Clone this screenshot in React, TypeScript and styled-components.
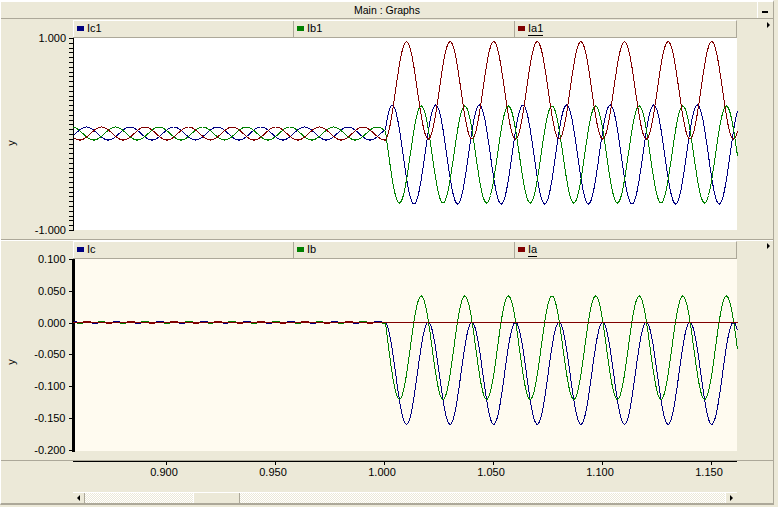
import React from 'react';
import styled, { createGlobalStyle } from 'styled-components';

const FACE = '#ece9d8';
const EDGE = '#aca899';

const GlobalStyle = createGlobalStyle`
  html, body {
    margin: 0;
    padding: 0;
    background: ${FACE};
  }
  body {
    font-family: "Liberation Sans", Arial, sans-serif;
    font-size: 11px;
    color: #000;
  }
`;

const Window = styled.div`
  width: 774px;
  height: 505px;
  display: flex;
  flex-direction: column;
  background: ${FACE};
  border-top: 2px solid #fff;
  border-left: 1px solid #fff;
  border-right: 1px solid ${EDGE};
  border-bottom: 2px solid ${EDGE};
  box-sizing: border-box;
  overflow: hidden;
`;

const TitleBar = styled.div`
  height: 17px;
  flex: none;
  display: flex;
  align-items: center;
  justify-content: center;
  border-bottom: 1px solid ${EDGE};
  position: relative;
  font-size: 10.5px;
  box-sizing: border-box;
`;

const MinButton = styled.button`
  position: absolute;
  right: 0;
  top: 0;
  width: 16px;
  height: 16px;
  padding: 0 1px 0 0;
  background: ${FACE};
  border: 0;
  border-left: 1px solid #fff;
  display: flex;
  align-items: center;
  justify-content: center;
  box-sizing: border-box;

  &::before {
    content: '';
    display: block;
    width: 6px;
    height: 2px;
    margin-top: 3px;
    background: #000;
  }
`;

const Panel = styled.section<{ $lit?: boolean }>`
  height: 221px;
  flex: none;
  display: flex;
  border-top: 1px solid ${p => (p.$lit ? '#fff' : FACE)};
  border-bottom: 1px solid ${EDGE};
  box-sizing: border-box;
`;

const AxisSvg = styled.svg`
  display: block;
  flex: none;
  width: 72px;
`;

const PanelBody = styled.div`
  width: 664px;
  flex: none;
  display: flex;
  flex-direction: column;
`;

const Legend = styled.div`
  height: 18px;
  flex: none;
  display: grid;
  grid-template-columns: 220px 221px 1fr;
  border-top: 1px solid #fff;
  border-bottom: 1px solid ${EDGE};
  border-right: 1px solid ${EDGE};
  box-sizing: border-box;
`;

const LegendTab = styled.div`
  display: flex;
  align-items: center;
  gap: 3px;
  padding-left: 3px;
  border-left: 1px solid #fff;

  & + & {
    border-left: 1px solid ${EDGE};
  }
`;

const Swatch = styled.span<{ $color: string }>`
  width: 7px;
  height: 5px;
  margin-top: -2px;
  background: ${p => p.$color};
`;

const LegendName = styled.span<{ $focus?: boolean }>`
  font-size: 11px;
  line-height: 13px;
  border-bottom: 1px solid ${p => (p.$focus ? '#000' : 'transparent')};
`;

const Plot = styled.svg<{ $bg: string }>`
  display: block;
  width: 664px;
  overflow: visible;
  background: ${p => p.$bg};
`;

const Gutter = styled.div`
  flex: 1;
  padding: 2px 0 0 30px;
`;

const SmallArrowRight = styled.span`
  display: block;
  width: 0;
  height: 0;
  border-style: solid;
  border-width: 3px 0 3px 3px;
  border-color: transparent transparent transparent #000;
`;

const XAxisRow = styled.div`
  height: 31px;
  flex: none;
  display: flex;
`;

const XAxisSvg = styled.svg`
  display: block;
  margin-left: 72px;
`;

const ScrollRow = styled.div`
  height: 11px;
  flex: none;
  margin-left: 72px;
  width: 664px;
  display: flex;
  border-top: 1px solid #fff;
  box-sizing: border-box;
`;

const ScrollButton = styled.div`
  width: 12px;
  flex: none;
  display: flex;
  align-items: center;
  justify-content: center;
  background: ${FACE};
  border-right: 1px solid ${EDGE};
  box-sizing: border-box;

  &:last-child {
    border-right: 0;
    border-left: 1px solid #fff;
  }
`;

const ArrowGlyph = styled.span<{ $left?: boolean }>`
  display: block;
  width: 0;
  height: 0;
  border-style: solid;
  border-width: ${p => (p.$left ? '3px 3px 3px 0' : '3px 0 3px 3px')};
  border-color: ${p =>
    p.$left
      ? 'transparent #000 transparent transparent'
      : 'transparent transparent transparent #000'};
`;

const Track = styled.div<{ $size: number }>`
  width: ${p => p.$size}px;
  flex: ${p => (p.$size ? 'none' : 1)};
  background: repeating-conic-gradient(${FACE} 0 25%, #fff 0 50%) 0 0 / 2px 2px;
`;

const Thumb = styled.div`
  width: 47px;
  flex: none;
  background: ${FACE};
  border-left: 1px solid #fff;
  border-right: 1px solid ${EDGE};
  box-sizing: border-box;
`;

const NAVY = '#000080';
const GREEN = '#008000';
const RED = '#800000';

const PLOT_W = 664;
const PERIOD = 43.6;
const FAULT_X = 385 - 73;

type Wave = { center: number; amp: number; peak: number };
type Curve = { color: string; points: string };

// plot x is px from the left edge of the plot; peaks are given in that frame too
const wave = (w: Wave, x: number) =>
  w.center - w.amp * Math.cos(((x - w.peak) / PERIOD) * 2 * Math.PI);

const makePoints = (before: Wave, after: Wave) => {
  const jump = wave(before, FAULT_X) - wave(after, FAULT_X);
  const pts: string[] = [];
  for (let x = 0; x <= PLOT_W; x += 1) {
    const y =
      x <= FAULT_X
        ? wave(before, x)
        : wave(after, x) + jump * Math.exp(-(x - FAULT_X) / 2.5);
    pts.push(`${x + 0.5},${y.toFixed(1)}`);
  }
  return pts.join(' ');
};

const toPlot = (peak: number) => peak - 73;

const topCurves: Curve[] = [
  {
    color: NAVY,
    points: makePoints(
      { center: 95.5, amp: 6.5, peak: toPlot(86) },
      { center: 116.5, amp: 49.5, peak: toPlot(391.7) },
    ),
  },
  {
    color: GREEN,
    points: makePoints(
      { center: 95.5, amp: 6.5, peak: toPlot(115) },
      { center: 116.5, amp: 48.5, peak: toPlot(420.7) },
    ),
  },
  {
    color: RED,
    points: makePoints(
      { center: 95.5, amp: 6.5, peak: toPlot(101) },
      { center: 52.3, amp: 48.7, peak: toPlot(406) },
    ),
  },
];

const bottomCurves: Curve[] = [
  {
    color: NAVY,
    points: makePoints(
      { center: 63.45, amp: 0.55, peak: toPlot(116) },
      { center: 114.3, amp: 51, peak: toPlot(427.8) },
    ),
  },
  {
    color: GREEN,
    points: makePoints(
      { center: 63.45, amp: 0.55, peak: toPlot(101) },
      { center: 88.7, amp: 51.7, peak: toPlot(420.7) },
    ),
  },
  {
    color: RED,
    points: makePoints(
      { center: 63.45, amp: 0.55, peak: toPlot(86.5) },
      { center: 63.5, amp: 0, peak: 0 },
    ),
  },
];

const axisText = {
  fontSize: 11,
  fontFamily: '"Liberation Sans", Arial, sans-serif',
  fill: '#000',
};

const TopAxis = () => {
  const ticks = Array.from({ length: 41 }, (_, i) => Math.round(18 + i * 4.8));
  return (
    <AxisSvg height={219} viewBox="0 0 72 219">
      <text {...axisText} x={65} y={22} textAnchor="end">1.000</text>
      <text {...axisText} x={65} y={214} textAnchor="end">-1.000</text>
      <text {...axisText} transform="translate(14 123) rotate(-90)" textAnchor="middle">y</text>
      <g stroke="#000" shapeRendering="crispEdges">
        {ticks.map(t => (
          <line key={t} x1={68} y1={t + 0.5} x2={72} y2={t + 0.5} />
        ))}
      </g>
    </AxisSvg>
  );
};

const bottomLabels = ['0.100', '0.050', '0.000', '-0.050', '-0.100', '-0.150', '-0.200'];

const BottomAxis = () => (
  <AxisSvg height={219} viewBox="0 0 72 219">
    {bottomLabels.map((label, i) => (
      <text key={label} {...axisText} x={64.5} y={22 + i * 31.83} textAnchor="end">{label}</text>
    ))}
    <text {...axisText} transform="translate(14 121) rotate(-90)" textAnchor="middle">y</text>
    <g stroke="#000" shapeRendering="crispEdges">
      <rect x={71} y={18} width={1} height={193} fill="#000" stroke="none" />
      {bottomLabels.map((label, i) => {
        const y = Math.round(18 + i * 31.83) + 0.5;
        return <line key={label} x1={68} y1={y} x2={71} y2={y} />;
      })}
    </g>
  </AxisSvg>
);

const Curves = ({ curves }: { curves: Curve[] }) => (
  <>
    {curves.map(c => (
      <polyline
        key={c.color}
        points={c.points}
        fill="none"
        stroke={c.color}
        strokeWidth={1}
        shapeRendering="crispEdges"
      />
    ))}
  </>
);

const xTicks = [
  { x: 93.5, label: '0.900' },
  { x: 202.5, label: '0.950' },
  { x: 311.5, label: '1.000' },
  { x: 420.5, label: '1.050' },
  { x: 529.5, label: '1.100' },
  { x: 638.5, label: '1.150' },
];

const names = (suffix: string) => [
  { name: `Ic${suffix}`, color: NAVY },
  { name: `Ib${suffix}`, color: GREEN },
  { name: `Ia${suffix}`, color: RED },
];

const LegendBar = ({ suffix }: { suffix: string }) => (
  <Legend>
    {names(suffix).map((item, i) => (
      <LegendTab key={item.name}>
        <Swatch $color={item.color} />
        <LegendName $focus={i === 2}>{item.name}</LegendName>
      </LegendTab>
    ))}
  </Legend>
);

const App = () => (
  <Window>
    <GlobalStyle />
    <TitleBar>
      Main : Graphs
      <MinButton aria-label="minimize" />
    </TitleBar>

    <Panel>
      <TopAxis />
      <PanelBody>
        <LegendBar suffix="1" />
        <Plot $bg="#fff" width={PLOT_W} height={192} viewBox={`0 0 ${PLOT_W} 192`}>
          <line x1={0.5} y1={0} x2={0.5} y2={193} stroke="#000" shapeRendering="crispEdges" />
          <Curves curves={topCurves} />
        </Plot>
      </PanelBody>
      <Gutter>
        <SmallArrowRight />
      </Gutter>
    </Panel>

    <Panel $lit>
      <BottomAxis />
      <PanelBody>
        <LegendBar suffix="" />
        <Plot $bg="#fffbf0" width={PLOT_W} height={192} viewBox={`0 0 ${PLOT_W} 192`}>
          <rect x={0} y={0} width={2} height={193} fill="#000" />
          <Curves curves={bottomCurves} />
          <line x1={2} y1={63.5} x2={PLOT_W} y2={63.5} stroke={RED} shapeRendering="crispEdges" />
        </Plot>
      </PanelBody>
      <Gutter>
        <SmallArrowRight />
      </Gutter>
    </Panel>

    <XAxisRow>
      <XAxisSvg width={664} height={31} viewBox="0 0 664 31">
        <line x1={0} y1={0.5} x2={664} y2={0.5} stroke="#000" shapeRendering="crispEdges" />
        {xTicks.map(t => (
          <g key={t.label}>
            <line x1={t.x} y1={1} x2={t.x} y2={4} stroke="#000" shapeRendering="crispEdges" />
            <text {...axisText} x={t.x - 2.5} y={15} textAnchor="middle">{t.label}</text>
          </g>
        ))}
      </XAxisSvg>
    </XAxisRow>

    <ScrollRow>
      <ScrollButton><ArrowGlyph $left /></ScrollButton>
      <Track $size={108} />
      <Thumb />
      <Track $size={0} />
      <ScrollButton><ArrowGlyph /></ScrollButton>
    </ScrollRow>
  </Window>
);

export default App;
